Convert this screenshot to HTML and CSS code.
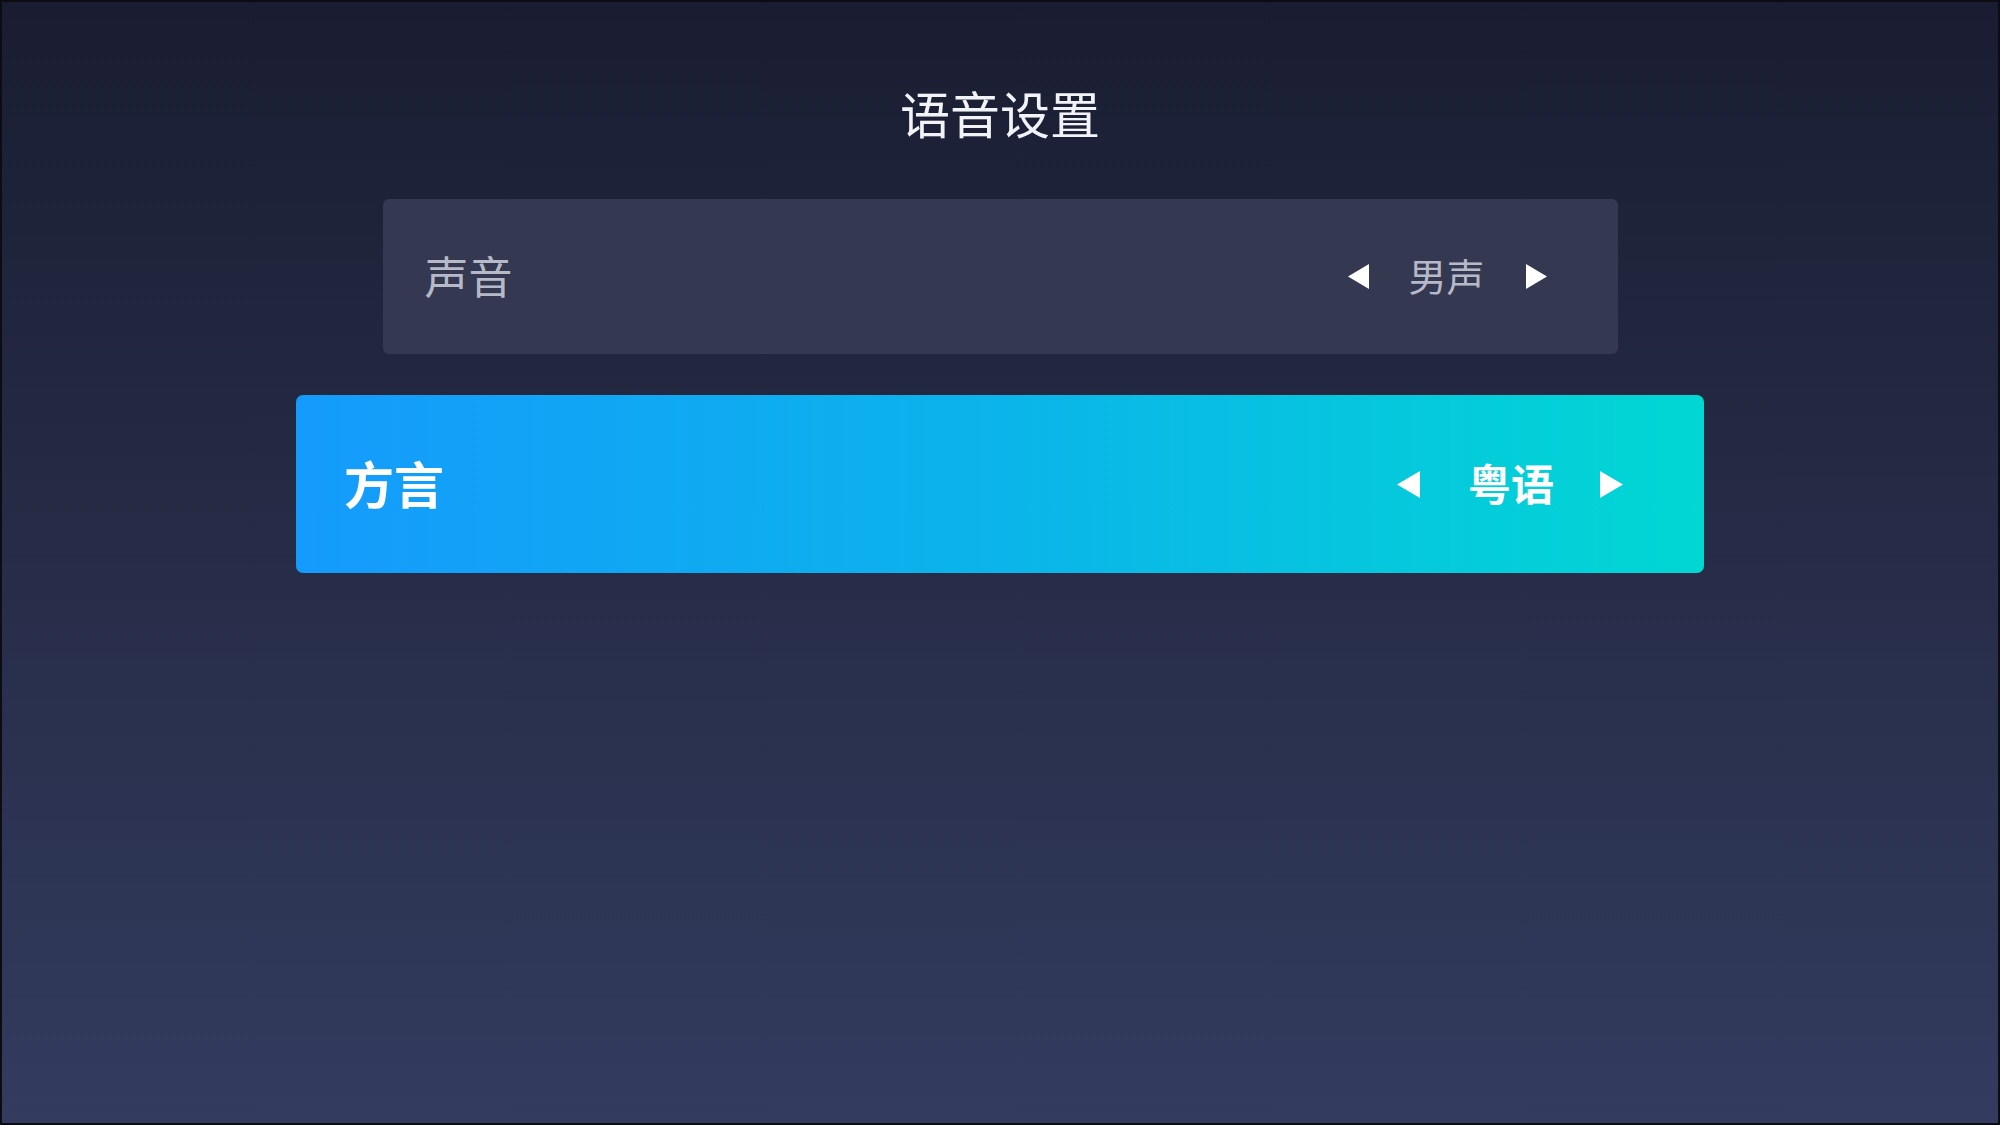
FILE: index.html
```html
<!DOCTYPE html>
<html lang="zh-CN">
<head>
  <meta charset="UTF-8" />
  <meta name="viewport" content="width=device-width, initial-scale=1.0"/>
  <title>语音设置</title>
  <link rel="stylesheet" href="styles.css">
</head>
<body>

  <div class="screen">
    <h1 class="title">语音设置</h1>

    <div class="option">
      <span class="label">声音</span>
      <div class="picker">
        <svg class="arrow" viewBox="0 0 21 25"><polygon points="21,0 21,25 0,12.5" /></svg>
        <span class="value">男声</span>
        <svg class="arrow" viewBox="0 0 21 25"><polygon points="0,0 0,25 21,12.5" /></svg>
      </div>
    </div>

    <div class="option active">
      <span class="label">方言</span>
      <div class="picker">
        <svg class="arrow" viewBox="0 0 23 27"><polygon points="23,0 23,27 0,13.5" /></svg>
        <span class="value">粤语</span>
        <svg class="arrow" viewBox="0 0 23 27"><polygon points="0,0 0,27 23,13.5" /></svg>
      </div>
    </div>
  </div>

</body>
</html>
```

FILE: styles.css
```css
:root {
  --bg-top: #1a1d31;
  --bg-bottom: #333c5f;
  --card: #343850;
  --muted: #b6b9c8;
  --text: #f2f3f6;
}

* { box-sizing: border-box; }

body {
  margin: 0;
  font-family: "Noto Sans CJK SC", "Noto Sans", sans-serif;
  color: var(--text);
}

.screen {
  height: 100vh;
  border: 2px solid #0c0d14;
  background: linear-gradient(180deg, var(--bg-top), var(--bg-bottom));
  display: flex;
  flex-direction: column;
  align-items: center;
  padding-top: 85px;
}

.title {
  margin: 0;
  font-size: 50px;
  font-weight: 400;
  line-height: 50px;
  height: 50px;
  margin-bottom: 1px;
}

.option {
  display: flex;
  justify-content: space-between;
  align-items: center;
  width: 1235px;
  height: 155px;
  margin-top: 61px;
  padding: 0 71px 4px 42px;
  background: var(--card);
  border-radius: 6px;
  color: var(--muted);
}

.option .label {
  font-size: 44px;
  line-height: 1;
}

.picker {
  display: flex;
  align-items: center;
}

.arrow {
  width: 21px;
  height: 25px;
  margin-top: 4px;
  fill: #ffffff;
}

.picker .value {
  font-size: 38px;
  line-height: 1;
  margin: 0 41px 0 39px;
}

.option.active {
  width: 1408px;
  height: 178px;
  margin-top: 41px;
  padding: 0 81px 4px 48px;
  border-radius: 7px;
  background: linear-gradient(90deg, #159bfc 0%, #0bb4ea 50%, #01d7d3 100%);
  color: #ffffff;
}

.option.active .label {
  font-size: 50px;
  font-weight: 700;
}

.option.active .arrow {
  width: 23px;
  height: 27px;
}

.option.active .value {
  font-size: 43px;
  font-weight: 700;
  margin: 0 46px 0 48px;
}
```
